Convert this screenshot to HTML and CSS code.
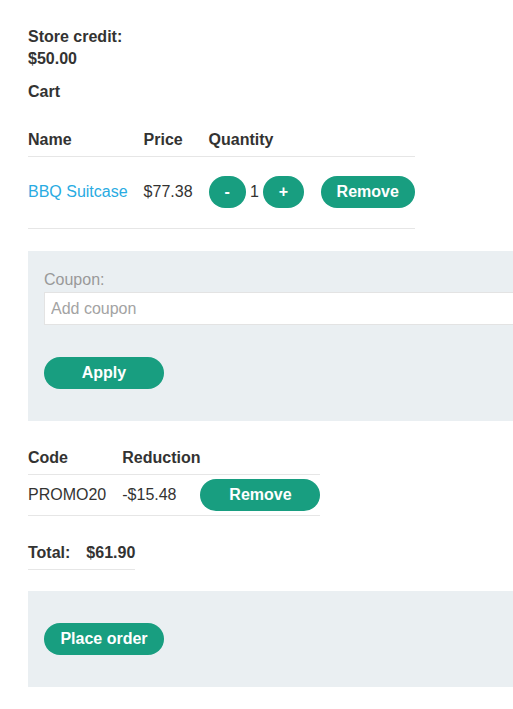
FILE: index.html
```html
<!DOCTYPE html>
<html>
<head>
<meta charset="utf-8">
<link rel="stylesheet" href="styles.css">
</head>
<body>
<div class="page">
  <p class="credit">Store credit:<br>$50.00</p>
  <p class="cart-title">Cart</p>
  <table class="cart">
    <thead>
      <tr><th class="c-name">Name</th><th class="c-price">Price</th><th class="c-qty">Quantity</th><th class="c-last"></th></tr>
    </thead>
    <tbody>
      <tr>
        <td class="c-name"><a class="link" href="#">BBQ Suitcase</a></td>
        <td class="c-price">$77.38</td>
        <td class="c-qty"><span class="qty"><button class="btn btn-sm">-</button><span class="qty-num">1</span><button class="btn btn-sm">+</button></span></td>
        <td class="c-last"><button class="btn btn-sm">Remove</button></td>
      </tr>
    </tbody>
  </table>

  <form class="panel coupon-panel">
    <label class="coupon-label" for="coupon">Coupon:</label>
    <input id="coupon" class="coupon-input" type="text" placeholder="Add coupon">
    <button class="btn btn-wide" type="button">Apply</button>
  </form>

  <table class="codes">
    <thead>
      <tr><th class="k-code">Code</th><th class="k-red">Reduction</th><th class="k-last"></th></tr>
    </thead>
    <tbody>
      <tr>
        <td class="k-code">PROMO20</td>
        <td class="k-red">-$15.48</td>
        <td class="k-last"><button class="btn btn-wide" type="button">Remove</button></td>
      </tr>
    </tbody>
  </table>

  <table class="total">
    <tr><th class="t-label">Total:</th><th class="t-val">$61.90</th></tr>
  </table>

  <form class="panel order-panel">
    <button class="btn btn-wide" type="button">Place order</button>
  </form>
</div>
</body>
</html>
```

FILE: styles.css
```css
html, body {
  margin: 0;
  padding: 0;
  background: #ffffff;
}
body {
  font-family: "Liberation Sans", Arial, sans-serif;
  font-size: 16px;
  line-height: 22px;
  color: #333332;
}
.page {
  padding: 26px 0 20px 28px;
}
p {
  margin: 0;
}
.credit {
  font-weight: bold;
}
.cart-title {
  font-weight: bold;
  margin-top: 11px;
}
table {
  border-collapse: collapse;
  border-spacing: 0;
}
th {
  text-align: left;
  font-weight: bold;
  padding: 0;
}
td {
  padding: 0;
}
.cart {
  margin-top: 16px;
}
.cart th {
  padding-top: 10px;
  padding-bottom: 5px;
  border-bottom: 1px solid #e6e6e6;
}
.cart td {
  padding-top: 19px;
  padding-bottom: 20px;
  border-bottom: 1px solid #e6e6e6;
  vertical-align: middle;
  white-space: nowrap;
}
.c-name, .c-price, .c-qty {
  padding-right: 16px;
}
.c-name { width: 98px; }
.c-price { width: 49px; }
.c-qty { width: 96px; }
.link {
  color: #29abe2;
  text-decoration: none;
}
.qty {
  display: inline-flex;
  align-items: center;
}
.qty-num {
  padding: 0 4px 0 4px;
}
.btn {
  font-family: "Liberation Sans", Arial, sans-serif;
  font-size: 16px;
  font-weight: bold;
  color: #ffffff;
  background: #189e80;
  border: none;
  border-radius: 16px;
  height: 32px;
  line-height: 32px;
  padding: 0 16px;
  margin: 0;
  display: inline-block;
  vertical-align: middle;
  cursor: pointer;
}
.btn-wide {
  min-width: 120px;
}
.panel {
  display: block;
  background: #eaeff2;
  margin: 0;
  overflow: hidden;
}
.coupon-panel {
  margin-top: 22px;
  padding: 18px 0 32px 16px;
}
.coupon-label {
  display: block;
  color: #999999;
  line-height: 22px;
}
.coupon-input {
  display: block;
  box-sizing: border-box;
  width: calc(100% + 40px);
  height: 33px;
  margin: 1px 0 32px 0;
  padding: 0 6px;
  border: 1px solid #e3e3e3;
  background: #ffffff;
  font-family: "Liberation Sans", Arial, sans-serif;
  font-size: 16px;
  color: #333332;
  outline: none;
}
.coupon-input::placeholder {
  color: #a3a3a3;
}
.codes {
  margin-top: 16px;
}
.codes th {
  padding-top: 10px;
  padding-bottom: 5px;
  border-bottom: 1px solid #e6e6e6;
}
.codes td {
  padding-top: 4px;
  padding-bottom: 4px;
  border-bottom: 1px solid #e6e6e6;
  white-space: nowrap;
}
.k-code { width: 78px; padding-right: 16px; }
.k-red { width: 78px; }
.total {
  margin-top: 26px;
}
.total th {
  padding-bottom: 5px;
  border-bottom: 1px solid #e6e6e6;
}
.t-label { padding-right: 16px; }
.order-panel {
  margin-top: 21px;
  padding: 32px 16px;
}
```
